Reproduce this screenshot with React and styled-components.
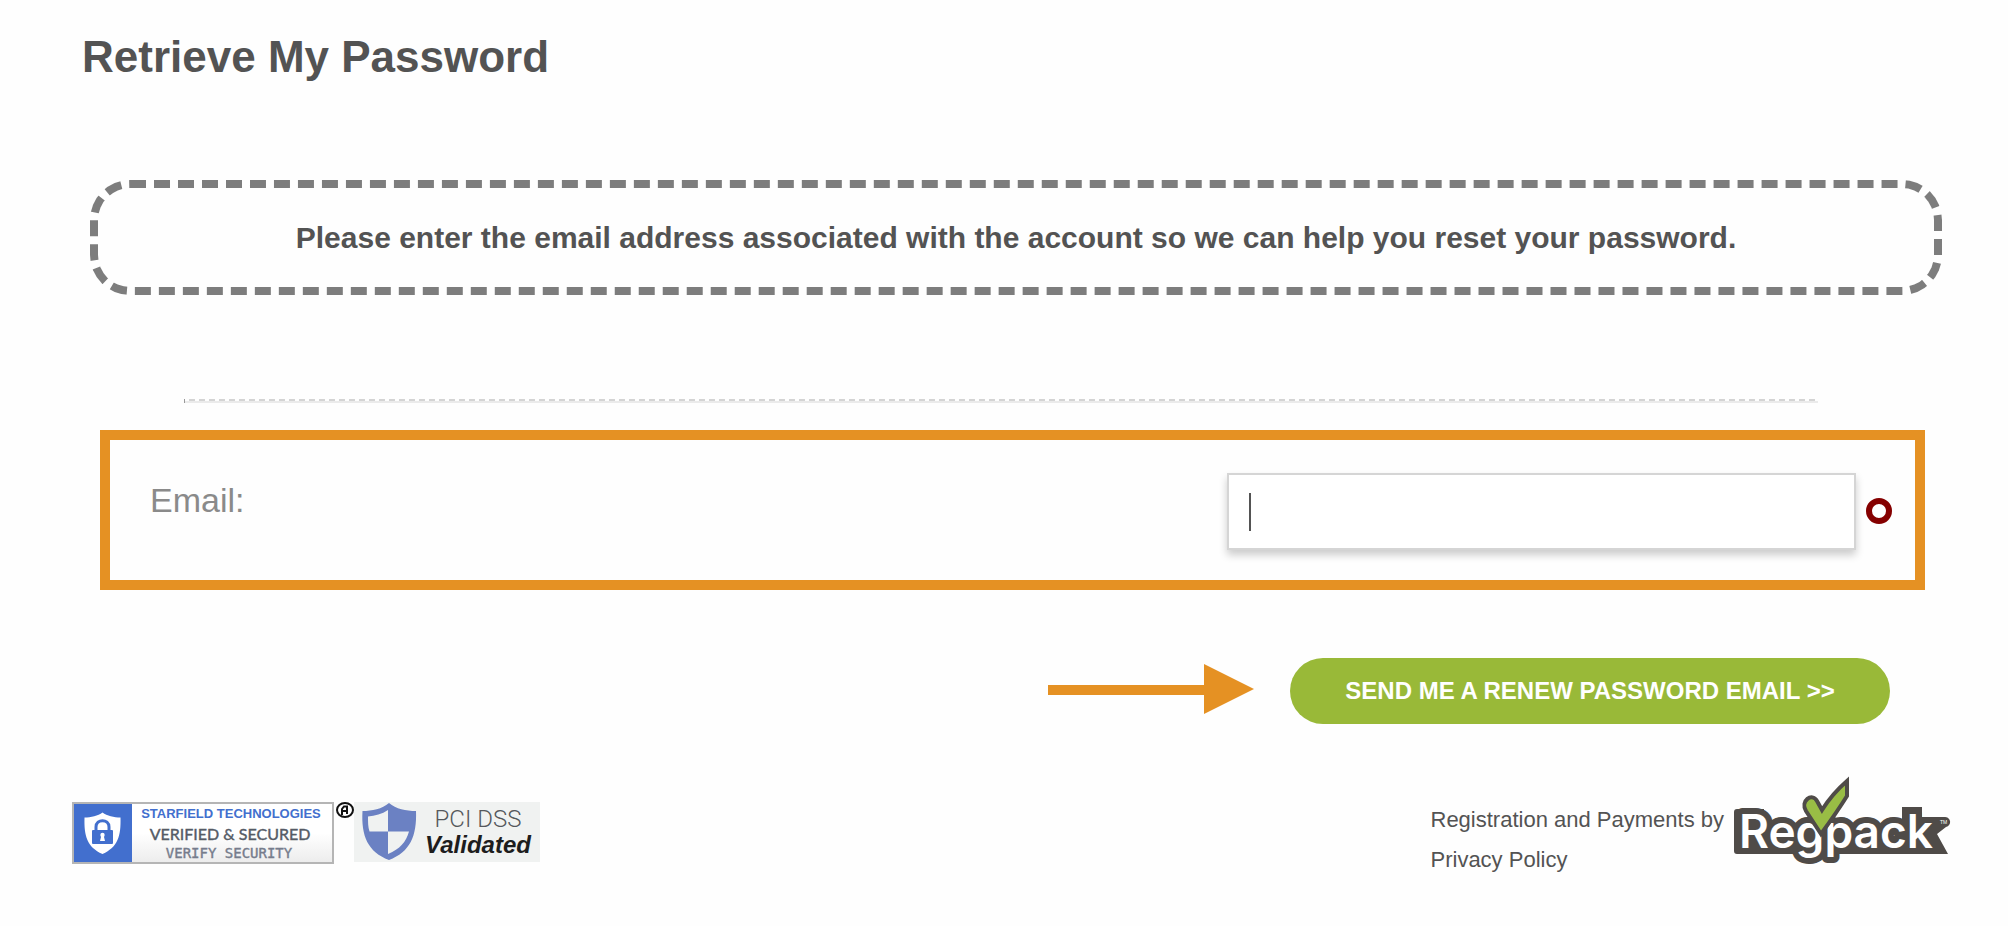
import React, { useState } from "react";
import styled, { createGlobalStyle } from "styled-components";

export default function App() {
  const [email, setEmail] = useState("");

  return (
    <Page>
      <GlobalStyle />
      <Title>Retrieve My Password</Title>
      <Notice>Please enter the email address associated with the account so we can help you reset your password.</Notice>
      <Divider />
      <form onSubmit={e => e.preventDefault()}>
        <Field>
          <Label htmlFor="email">Email:</Label>
          <InputWrap>
            <Input id="email" type="text" value={email} onChange={e => setEmail(e.target.value)} />
            {email === "" && <Caret />}
          </InputWrap>
          <Required />
        </Field>
        <Actions>
          <Arrow />
          <Button type="submit">SEND ME A RENEW PASSWORD EMAIL &gt;&gt;</Button>
        </Actions>
      </form>
      <Footer>
        <Badges>
          <StarfieldBadge />
          <RegisteredMark />
          <PciBadge />
        </Badges>
        <Credits>
          <Links>
            <span>Registration and Payments by</span>
            <a href="#privacy">Privacy Policy</a>
          </Links>
          <RegpackLogo />
        </Credits>
      </Footer>
    </Page>
  );
}

function Arrow() {
  return (
    <ArrowIcon width="206" height="50" viewBox="0 0 206 50" aria-hidden="true">
      <path d="M0 21H156V0L206 25L156 50V31H0Z" fill="#e59123" />
    </ArrowIcon>
  );
}

function StarfieldBadge() {
  return (
    <svg width="262" height="62" viewBox="0 0 262 62" role="img">
      <defs>
        <linearGradient id="panel" x1="0" y1="0" x2="0" y2="1">
          <stop offset="0.5" stopColor="#fff" />
          <stop offset="1" stopColor="#ececec" />
        </linearGradient>
      </defs>
      <rect x="1" y="1" width="260" height="60" fill="url(#panel)" stroke="#b5b5b5" strokeWidth="2" />
      <rect x="2" y="2" width="58" height="58" fill="#426fce" />
      <path d="M30.500 10.500C35 14 42 15.500 48.500 15.500C49 34 46 45 30.500 52C15 45 12 34 12.500 15.500C19 15.500 26 14 30.500 10.500Z" fill="#fff" />
      <path d="M24 29V25C24 16.500 37 16.500 37 25V29" fill="none" stroke="#426fce" strokeWidth="3" />
      <rect x="20" y="28" width="21" height="14" rx="1" fill="#426fce" />
      <circle cx="30.500" cy="33" r="2.200" fill="#fff" />
      <path d="M29.500 33H31.500L33 39H28Z" fill="#fff" />
      <BadgeText x="159" y="16" fontSize="13" fontWeight="bold" fill="#426fce">STARFIELD TECHNOLOGIES</BadgeText>
      <BadgeText x="158" y="38" fontSize="16" fontFamily="Lato" fill="#555b66" stroke="#555b66" strokeWidth="0.4">VERIFIED &amp; SECURED</BadgeText>
      <BadgeText x="157" y="56" fontSize="14" fontFamily="DejaVu Sans Mono" fill="#767c8c" stroke="#767c8c" strokeWidth="0.4">VERIFY SECURITY</BadgeText>
    </svg>
  );
}

function RegisteredMark() {
  return (
    <svg width="20" height="18" viewBox="0 0 20 18" aria-hidden="true">
      <ellipse cx="11" cy="8" rx="8" ry="7" fill="none" stroke="#111" strokeWidth="2" />
      <path d="M8 13V7L10 4.500H13V12M8 9H13" fill="none" stroke="#111" strokeWidth="2" />
    </svg>
  );
}

function PciBadge() {
  return (
    <svg width="186" height="60" viewBox="0 0 186 60" role="img">
      <rect width="186" height="60" fill="#f0f2f1" />
      <path d="M35 1C42 7 52 9 62 9C63 34 56 50 35 58C14 50 7 34 8.500 9C18 9 28 7 35 1Z" fill="#6b81c3" />
      <path d="M34 8C28 12 21 14 14 14.500C14 20 14 25 15.500 29.500H34Z" fill="#f0f2f1" />
      <path d="M34 29.500H55C52 40 46 47 34 52Z" fill="#f0f2f1" />
      <BadgeText x="124" y="25" fontSize="24" fontFamily="Roboto" fontWeight="300" fill="#55585c">PCI DSS</BadgeText>
      <BadgeText x="124" y="51" fontSize="24" fontWeight="bold" fontStyle="italic" fill="#1d1d1d">Validated</BadgeText>
    </svg>
  );
}

function RegpackLogo() {
  return (
    <svg width="218" height="90" viewBox="0 0 218 90" role="img">
      <path d="M0 36Q0 33 3 33H30V60H168V31H188V41H210A5 5 0 0 1 212 51L203 58L214 78H3Q0 78 0 75Z" fill="#4f4b48" />
      <Wordmark x="5" y="72">Regpack</Wordmark>
      <path d="M72 35C66 25 78 16 83 25L88 34Q98 18 113 5V20Q103 36 87 58Z" fill="#99bd45" stroke="#4f4b48" strokeWidth="4" />
      <text x="206" y="48" fontSize="5" fill="#fff" fontFamily="Liberation Sans">TM</text>
    </svg>
  );
}

const GlobalStyle = createGlobalStyle`
  * {
    box-sizing: border-box;
  }
  body {
    margin: 0;
    background: #fefefe;
    color: #535353;
    font-family: "Liberation Sans", Arial, sans-serif;
  }
`

const Page = styled.main`
  padding: 31px 56px 0 72px;
`

const Title = styled.h1`
  margin: 0 10px;
  font-size: 44px;
  line-height: 52px;
`

const Notice = styled.p`
  margin: 97px 10px 0 18px;
  padding: 33px 20px 34px;
  border: 8px dashed #7d7d7d;
  border-radius: 40px;
  font-size: 30px;
  font-weight: bold;
  line-height: 34px;
  padding-bottom: 32px;
  text-align: center;
`

const Divider = styled.hr`
  height: 4px;
  margin: 104px 134px 27px 112px;
  border: none;
  border-left: 1px solid #999;
  background:
    repeating-linear-gradient(90deg, #fefefe 0 4px, #d4d4d4 4px 10px) top / 100% 2px no-repeat,
    #ebebeb;
`

const Field = styled.div`
  display: flex;
  align-items: flex-start;
  margin: 0 27px 0 28px;
  padding: 33px 23px 30px 40px;
  border: 10px solid #e59123;
`

const Label = styled.label`
  flex: 1;
  margin-top: 7px;
  color: #8a8a8a;
  font-size: 34px;
  line-height: 40px;
`

const InputWrap = styled.div`
  position: relative;
  width: 629px;
`

const Input = styled.input`
  display: block;
  width: 100%;
  height: 77px;
  padding: 0 20px;
  border: 2px solid #d5d5d5;
  outline: none;
  background: #fff;
  box-shadow: 0 5px 8px rgba(0, 0, 0, 0.2);
  color: #535353;
  font-family: inherit;
  font-size: 34px;
`

const Caret = styled.span`
  position: absolute;
  top: 20px;
  left: 22px;
  width: 2px;
  height: 38px;
  background: #535353;
  pointer-events: none;
`

const Required = styled.span`
  width: 26px;
  height: 26px;
  margin: 25px 0 0 10px;
  border: 6px solid #850000;
  border-radius: 50%;
`

const Actions = styled.div`
  display: flex;
  justify-content: flex-end;
  align-items: center;
  gap: 36px;
  margin: 68px 62px 0 0;
`

const ArrowIcon = styled.svg`
  margin-bottom: 4px;
`

const Button = styled.button`
  width: 600px;
  height: 66px;
  border: none;
  border-radius: 33px;
  background: #99b938;
  color: #fff;
  font-family: inherit;
  font-size: 24px;
  font-weight: bold;
  cursor: pointer;
`

const Footer = styled.footer`
  display: flex;
  justify-content: space-between;
  align-items: flex-start;
  margin-top: 52px;
`

const Badges = styled.div`
  display: flex;
  margin-top: 26px;
`

const Credits = styled.div`
  display: flex;
  gap: 10px;
`

const Links = styled.div`
  display: flex;
  flex-direction: column;
  margin-top: 24px;
  font-size: 22px;
  line-height: 40px;
  a {
    color: inherit;
    text-decoration: none;
  }
`

const BadgeText = styled.text`
  text-anchor: middle;
`

const Wordmark = styled.text`
  fill: #fff;
  stroke: #4f4b48;
  stroke-width: 12px;
  stroke-linejoin: round;
  paint-order: stroke;
  font-family: Inter, sans-serif;
  font-size: 46px;
  font-weight: 600;
`
